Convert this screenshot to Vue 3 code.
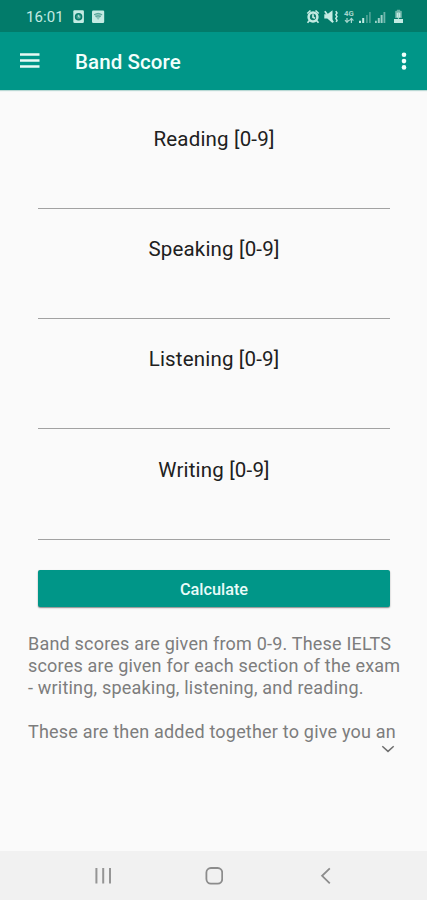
<template>
  <div class="screen">
    <div class="statusBar">
      <span class="time">16:01</span>
      <svg class="notifications" width="32" height="14" viewBox="0 0 32 14">
        <rect x="0.3" y="0.3" width="10.6" height="12.7" rx="1.2" fill="#c4ebe3" />
        <circle cx="5.6" cy="6.7" r="3" fill="#4ba293" stroke="#087d6c" stroke-width="1.6" />
        <path d="M5.6 4.8v2.2h1.6" fill="none" stroke="#c4ebe3" stroke-width="0.8" />
        <rect x="19" y="0.5" width="12.2" height="12.4" rx="1.2" fill="#c4ebe3" />
        <path d="M21 4.5Q25.1 1.8 29.2 4.5L25.1 10z" fill="#8cc4bb" />
        <path d="M21 4.6q4.1-2.7 8.2 0M22.5 6.6q2.6-1.6 5.2 0" fill="none" stroke="#4b9f92" stroke-width="0.9" />
      </svg>
      <svg class="system" width="100" height="16" viewBox="306 9 100 16">
        <g fill="none" stroke="#c4ebe3">
          <circle cx="313" cy="17" r="4.4" fill="#137e6f" stroke-width="2.5" />
          <path d="M313 14.3v3l2 1M307.3 13.5l3.2-3M318.7 13.5l-3.2-3M309.5 20.5l-2 2.2M316.5 20.5l2 2.2" stroke-width="1.7" />
          <path d="M324.8 11.2l8.4 11" stroke-width="1.7" />
          <path d="M335.8 11.2l1.2 1.8-1.2 1.8 1.2 1.8-1.2 1.8 1.2 1.8-.8 1.7" stroke-width="1.5" />
        </g>
        <path d="M324.3 14.2h3l5.2-4v12.8l-5.2-4.6h-3z" fill="#c4ebe3" />
        <text x="344" y="16" font-size="7.8">4G</text>
        <path d="M347 18v4.5M345 20.2l2 2.2 2-2.2M351.4 23v-4.5M349.4 20.6l2-2.2 2 2.2" fill="none" stroke="#a5d5cc" stroke-width="1.2" />
        <path d="M359 20.8h2V23h-2zM362.2 18h2v5h-2z" fill="#c4ebe3" />
        <path d="M366 15h1.8v8H366zM369 12h1.8v11H369z" fill="#489f91" />
        <path d="M375 20.8h1.8V23H375zM377.8 18h2v5h-2zM380.6 15h2v8h-2z" fill="#9bd0c7" />
        <path d="M383.5 12h1.8v11h-1.8z" fill="#6db5aa" />
        <path d="M395.2 11.5q0-.8.8-.8h1v-.9h3v.9h1q.8 0 .8.8V18h-6.6z" fill="#70b5a9" />
        <path d="M396.7 12.7h3.6v4.3h-3.6zM394 19h9v4h-9z" fill="#c4ebe3" />
        <path d="M398.5 12.5v6M396.7 16.8l1.8 1.8 1.8-1.8" fill="none" stroke="#a5d5cc" />
      </svg>
    </div>

    <header class="appBar">
      <button class="iconButton menu" aria-label="Menu">
        <svg width="20" height="16" viewBox="0 0 20 16">
          <path d="M0 1.6h19.5M0 7.5h19.5M0 13.4h19.5" stroke="#e7faf5" stroke-width="2.5" />
        </svg>
      </button>
      <h1 class="title">Band Score</h1>
      <button class="iconButton more" aria-label="More">
        <svg width="6" height="18" viewBox="0 0 6 18" fill="#effffb">
          <circle cx="3" cy="2.8" r="2.3" />
          <circle cx="3" cy="9.1" r="2.3" />
          <circle cx="3" cy="15.4" r="2.3" />
        </svg>
      </button>
    </header>

    <form class="scores" @submit.prevent="calculate">
      <label v-for="section in sections" :key="section.name" class="field">
        <span class="label">{{ section.name }} [0-9]</span>
        <input v-model="section.score" inputmode="decimal">
      </label>
      <button class="calculate">Calculate</button>
    </form>

    <div class="about">
      <p>Band scores are given from 0-9. These IELTS<br>scores are given for each section of the exam<br>- writing, speaking, listening, and reading.</p>
      <p>These are then added together to give you an</p>
      <svg class="expand" width="14" height="8" viewBox="0 0 14 8">
        <path d="M1.3 1.3L7 6.4l5.7-5.1" fill="none" stroke="#6e6e6e" stroke-width="1.5" />
      </svg>
    </div>

    <nav class="navBar">
      <svg width="18" height="18" viewBox="0 0 18 18">
        <path d="M2.4 1v15.5M9.2 1v15.5M16 1v15.5" stroke="#959595" stroke-width="2" />
      </svg>
      <svg width="18" height="18" viewBox="0 0 18 18">
        <rect x="1.4" y="1" width="15.8" height="15.6" rx="4.5" fill="none" stroke="#8c8c8c" stroke-width="1.8" />
      </svg>
      <svg width="18" height="18" viewBox="0 0 18 18">
        <path d="M13.8 1.3L6.1 8.8l7.7 7.5" fill="none" stroke="#8c8c8c" stroke-width="1.8" />
      </svg>
    </nav>
  </div>
</template>

<style>
  body {
    background: #fafafa;
  }
</style>

<style scoped>
  .screen {
    height: 100vh;
    display: flex;
    flex-direction: column;
    background: #fafafa;
    font-family: Roboto, sans-serif;
    overflow: hidden;
  }

  .statusBar {
    height: 32px;
    flex: none;
    box-sizing: border-box;
    display: flex;
    align-items: center;
    padding: 1px 21px 0 26px;
    background: #027b6a;
    color: #c4ebe3;
  }

  .time {
    width: 47px;
    font-size: 15px;
    letter-spacing: .1px;
  }

  .system {
    margin-left: auto;
  }

  .system text {
    font-weight: 700;
    fill: #a5d5cc;
  }

  .appBar {
    height: 58px;
    flex: none;
    box-sizing: border-box;
    display: flex;
    align-items: center;
    padding: 0 20px 0 20px;
    background: #009688;
    box-shadow: 0 1px 1px #b9d8d4;
  }

  .iconButton {
    display: flex;
    padding: 0;
    border: 0;
    background: none;
  }

  .menu {
    width: 55px;
  }

  .more {
    margin-left: auto;
  }

  .title {
    margin: 0;
    padding-top: 2px;
    color: #f2fffc;
    font-size: 20.5px;
    font-weight: 500;
    letter-spacing: .1px;
  }

  .scores {
    display: flex;
    flex-direction: column;
    padding: 35px 37px 0 38px;
  }

  .field {
    height: 110.2px;
    display: flex;
    flex-direction: column;
  }

  .label {
    align-self: center;
    color: #202020;
    font-size: 20.5px;
    line-height: 28px;
    letter-spacing: .18px;
  }

  .field input {
    height: 56px;
    box-sizing: border-box;
    padding: 0;
    border: 0;
    border-bottom: 1.5px solid #a2a2a2;
    outline: 0;
    background: none;
    font: inherit;
    font-size: 20px;
    text-align: center;
  }

  .calculate {
    height: 37.5px;
    margin-top: 4px;
    padding: 2px 0 0;
    border: 0;
    border-radius: 2px;
    background: #009688;
    box-shadow: 0 1px 1.5px #888;
    color: #e9fbf8;
    font-family: inherit;
    font-size: 16.3px;
    font-weight: 500;
  }

  .about {
    display: flex;
    flex-direction: column;
    padding: 26px 26px 0 28px;
    color: #7d7d7d;
    font-size: 18px;
    line-height: 22px;
    letter-spacing: .2px;
    white-space: nowrap;
  }

  .about p {
    margin: 0 0 22px;
  }

  .about p + p {
    margin: 0;
  }

  .expand {
    align-self: flex-end;
    margin: 2px 6px 0 0;
  }

  .navBar {
    height: 49px;
    flex: none;
    box-sizing: border-box;
    display: flex;
    justify-content: space-between;
    align-items: center;
    margin-top: auto;
    padding: 0 93px 0 94px;
    background: #f1f1f1;
  }
</style>

<script setup>
  import { ref } from "vue";

  const sections = ref([
    { name: "Reading", score: "" },
    { name: "Speaking", score: "" },
    { name: "Listening", score: "" },
    { name: "Writing", score: "" }
  ]);
  const band = ref(null);

  // overall band is the average rounded to the nearest half
  function calculate() {
    const total = sections.value.reduce((sum, s) => sum + Number(s.score), 0);
    band.value = Math.round(total / sections.value.length * 2) / 2;
  }
</script>
